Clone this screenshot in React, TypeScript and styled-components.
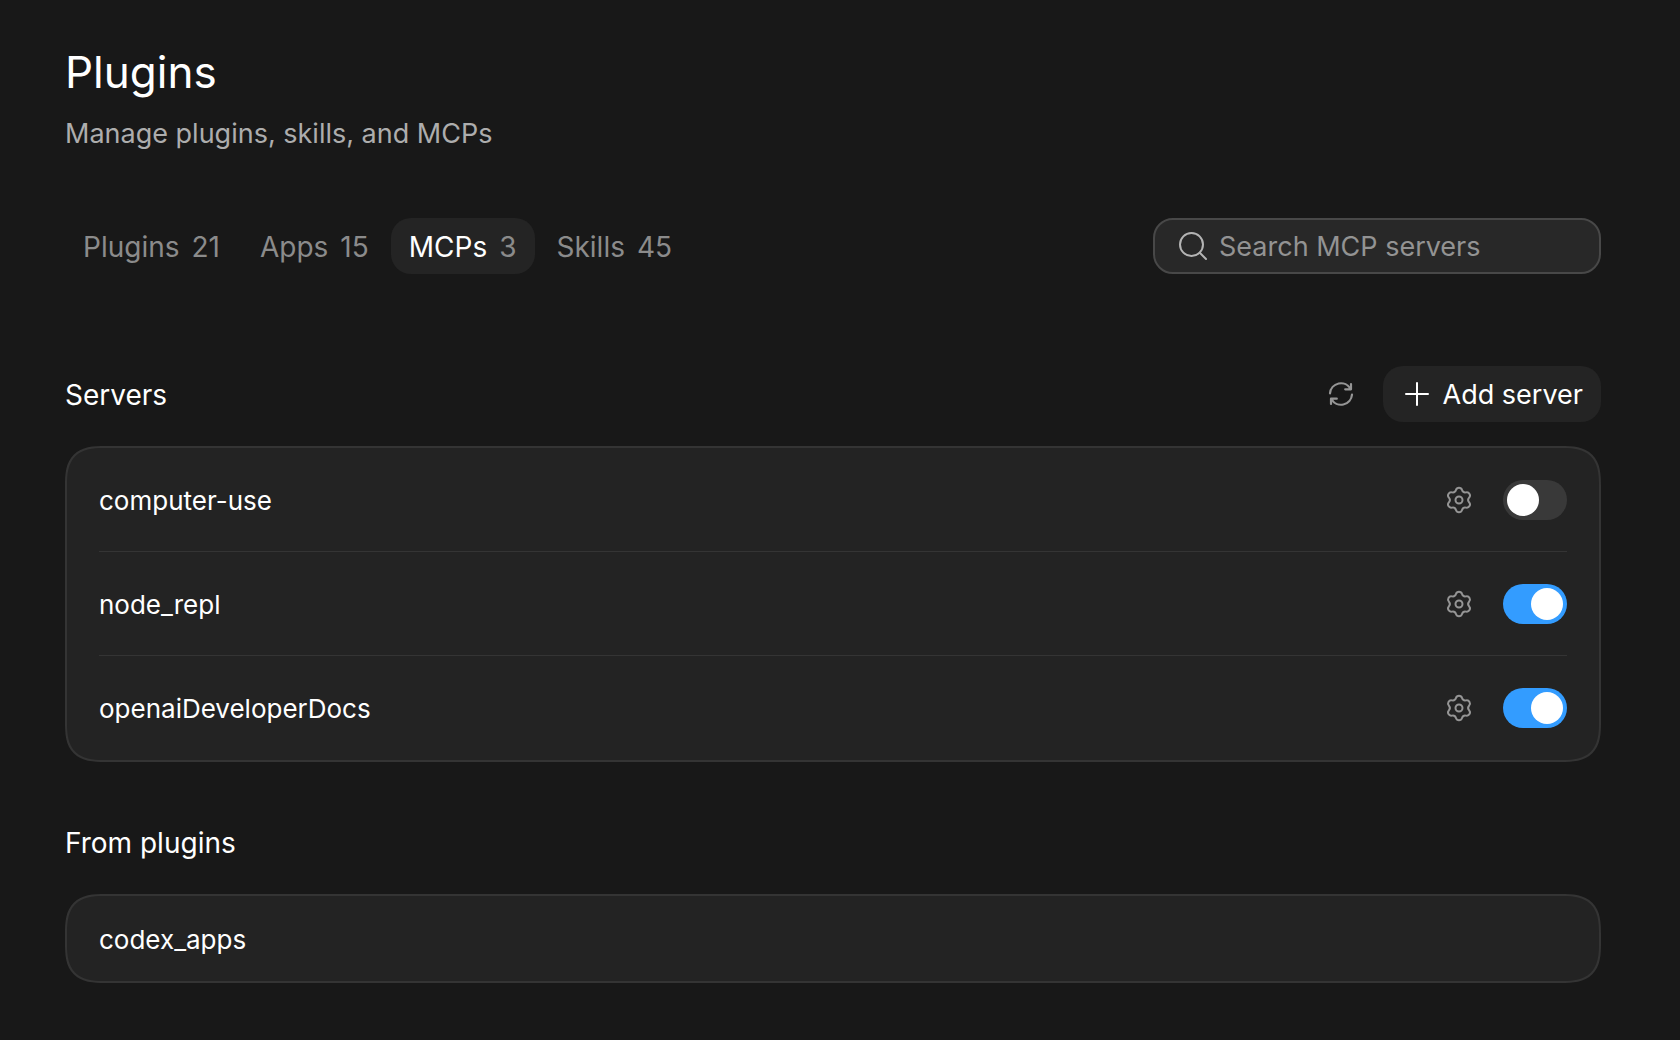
import React, { useState } from "react";
import styled, { createGlobalStyle } from "styled-components";

const GlobalStyle = createGlobalStyle`
  *, *::before, *::after { box-sizing: border-box; }
  body {
    margin: 0;
    background: #181818;
    color: #fff;
    font-family: Inter, "Liberation Sans", sans-serif;
    font-size: 27px;
    line-height: 40px;
    -webkit-font-smoothing: antialiased;
  }
  button, input { font: inherit; color: inherit; }
`;

const Page = styled.main`
  padding: 40px 79px 56px 65px;
`;

const Title = styled.h1`
  margin: 0;
  font-size: 44px;
  line-height: 64px;
  font-weight: 400;
`;

const Subtitle = styled.p`
  margin: 10px 0 0;
  color: #adadad;
`;

const Toolbar = styled.div`
  display: flex;
  align-items: center;
  justify-content: space-between;
  margin-top: 64px;
`;

const Tabs = styled.nav`
  display: flex;
  gap: 4px;
`;

const Tab = styled.button<{ $active: boolean }>`
  display: flex;
  align-items: center;
  gap: 12px;
  height: 56px;
  padding: 2px 18px 0;
  border: 0;
  border-radius: 20px;
  background: ${(p) => (p.$active ? "#242424" : "transparent")};
  color: ${(p) => (p.$active ? "#fff" : "#8b8b8b")};
  font-size: 28px;
  cursor: pointer;
`;

const Count = styled.span`
  color: #8b8b8b;
`;

const SearchBox = styled.label`
  display: flex;
  align-items: center;
  gap: 12px;
  width: 448px;
  height: 56px;
  padding: 0 24px;
  border: 2px solid #484848;
  border-radius: 20px;
  background: #282828;
  color: #b4b4b4;
`;

const SearchInput = styled.input`
  flex: 1;
  min-width: 0;
  padding: 2px 0 0;
  border: 0;
  outline: 0;
  background: transparent;
  &::placeholder { color: #939393; opacity: 1; }
`;

const SectionHeader = styled.header<{ $top: number }>`
  display: flex;
  align-items: center;
  justify-content: space-between;
  height: 56px;
  margin-top: ${(p) => p.$top}px;
`;

const SectionTitle = styled.h2`
  margin: 0;
  padding-top: 2px;
  font-size: 28px;
  font-weight: 400;
`;

const Actions = styled.div<{ $gap: number }>`
  display: flex;
  align-items: center;
  gap: ${(p) => p.$gap}px;
`;

const IconButton = styled.button`
  display: flex;
  align-items: center;
  justify-content: center;
  width: 52px;
  height: 52px;
  padding: 0;
  border: 0;
  background: transparent;
  color: #959595;
  cursor: pointer;
`;

const AddButton = styled.button`
  display: flex;
  align-items: center;
  gap: 12px;
  height: 56px;
  padding: 0 18px 0 20px;
  border: 0;
  border-radius: 20px;
  background: #242424;
  cursor: pointer;
`;

const AddLabel = styled.span`
  padding-top: 2px;
`;

const Card = styled.ul`
  margin: 24px 0 0;
  padding: 0 32px;
  list-style: none;
  border: 2px solid #343434;
  border-radius: 32px;
  background: #232323;
  @supports (corner-shape: superellipse(1.5)) {
    border-radius: 40px;
    corner-shape: superellipse(1.5);
  }
`;

const Row = styled.li<{ $compact?: boolean }>`
  display: flex;
  align-items: center;
  justify-content: space-between;
  height: ${(p) => (p.$compact ? 85 : 104)}px;
  font-size: 26px;
  &:not(:last-child) { box-shadow: inset 0 -1px #343434; }
`;

const ServerName = styled.label`
  padding-top: 2px;
`;

const Switch = styled.input`
  appearance: none;
  width: 64px;
  height: 40px;
  margin: 0;
  padding: 4px;
  border-radius: 20px;
  background: #393939;
  cursor: pointer;
  &::before {
    content: "";
    display: block;
    width: 32px;
    height: 32px;
    border-radius: 50%;
    background: #fff;
  }
  &:checked { background: #339cff; }
  &:checked::before { margin-left: 24px; }
`;

const SearchIcon = () => (
  <svg width="28" height="30" viewBox="0 0 28 30" fill="none" stroke="currentColor" strokeWidth="2" strokeLinecap="round" aria-hidden="true">
    <circle cx="12.5" cy="13.5" r="11.5" />
    <path d="M20.8 21.8 27 28" />
  </svg>
);

const PlusIcon = () => (
  <svg width="28" height="28" viewBox="0 0 28 28" fill="none" stroke="currentColor" strokeWidth="2" strokeLinecap="round" aria-hidden="true">
    <path d="M14 3v22M3 14h22" />
  </svg>
);

const RefreshIcon = () => (
  <svg width="28" height="28" viewBox="0 0 28 28" fill="none" stroke="currentColor" strokeWidth="2.2" strokeLinecap="round" strokeLinejoin="round" aria-hidden="true">
    <path d="M3 13.4A11 11 0 0 1 23.6 9M24 4V9.3H18.2M25 14.6A11 11 0 0 1 4.4 19M4 24V18.7H9.8" />
  </svg>
);

/* Six rounded lobes joined by shallow valleys. */
const gearPath = (() => {
  const at = (deg: number) => {
    const a = (deg * Math.PI) / 180;
    return `${(14 + 10.4 * Math.cos(a)).toFixed(2)} ${(14 + 10.4 * Math.sin(a)).toFixed(2)}`;
  };
  let d = `M${at(-107)}`;
  for (let k = 0; k < 6; k++) {
    const c = -90 + k * 60;
    d += `A3.2 3.2 0 0 1 ${at(c + 17)}A3.5 3.5 0 0 0 ${at(c + 43)}`;
  }
  return d + "Z";
})();

const GearIcon = () => (
  <svg width="28" height="28" viewBox="0 0 28 28" fill="none" stroke="currentColor" strokeWidth="2" strokeLinejoin="round" aria-hidden="true">
    <path d={gearPath} />
    <circle cx="14" cy="14" r="3.5" />
  </svg>
);

const tabs = [
  { label: "Plugins", count: 21 },
  { label: "Apps", count: 15 },
  { label: "MCPs", count: 3 },
  { label: "Skills", count: 45 },
];

const servers = [
  { name: "computer-use", enabled: false },
  { name: "node_repl", enabled: true },
  { name: "openaiDeveloperDocs", enabled: true },
];

export default function App() {
  const [active, setActive] = useState("MCPs");
  return (
    <>
      <GlobalStyle />
      <Page>
        <Title>Plugins</Title>
        <Subtitle>Manage plugins, skills, and MCPs</Subtitle>
        <Toolbar>
          <Tabs>
            {tabs.map((t) => (
              <Tab key={t.label} type="button" $active={t.label === active} onClick={() => setActive(t.label)}>
                {t.label}
                <Count>{t.count}</Count>
              </Tab>
            ))}
          </Tabs>
          <SearchBox>
            <SearchIcon />
            <SearchInput type="text" placeholder="Search MCP servers" aria-label="Search MCP servers" />
          </SearchBox>
        </Toolbar>
        <section>
          <SectionHeader $top={92}>
            <SectionTitle>Servers</SectionTitle>
            <Actions $gap={16}>
              <IconButton type="button" aria-label="Refresh">
                <RefreshIcon />
              </IconButton>
              <AddButton type="button">
                <PlusIcon />
                <AddLabel>Add server</AddLabel>
              </AddButton>
            </Actions>
          </SectionHeader>
          <Card>
            {servers.map((s) => (
              <Row key={s.name}>
                <ServerName htmlFor={s.name}>{s.name}</ServerName>
                <Actions $gap={18}>
                  <IconButton type="button" aria-label={`${s.name} settings`}>
                    <GearIcon />
                  </IconButton>
                  <Switch id={s.name} type="checkbox" role="switch" defaultChecked={s.enabled} />
                </Actions>
              </Row>
            ))}
          </Card>
        </section>
        <section>
          <SectionHeader $top={52}>
            <SectionTitle>From plugins</SectionTitle>
          </SectionHeader>
          <Card>
            <Row $compact>
              <ServerName as="span">codex_apps</ServerName>
            </Row>
          </Card>
        </section>
      </Page>
    </>
  );
}
